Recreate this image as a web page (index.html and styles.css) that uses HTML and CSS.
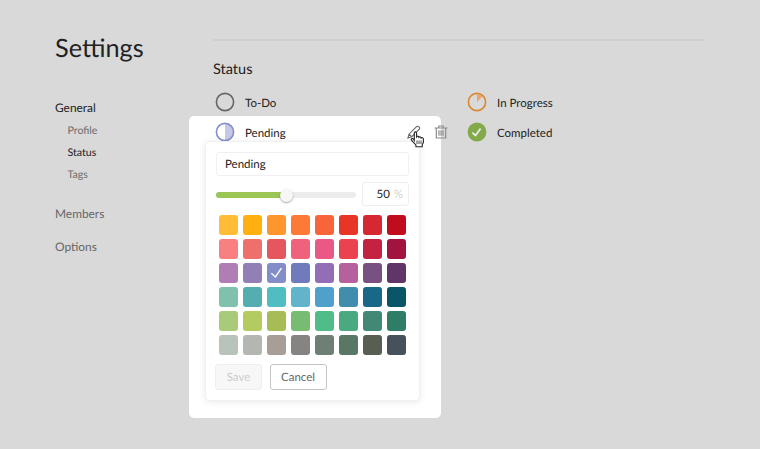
FILE: index.html
```html
<!DOCTYPE html>
<html lang="en">
<head>
<meta charset="utf-8">
<title>Settings</title>
<link rel="stylesheet" href="styles.css">
</head>
<body>
<div class="spotlight"></div>
<div class="page">
  <aside class="sidebar">
    <h1>Settings</h1>
    <nav>
      <a class="section current">General</a>
      <div class="subnav"><a>Profile</a><a class="current">Status</a><a>Tags</a></div>
      <a class="section">Members</a>
      <a class="section">Options</a>
    </nav>
  </aside>
  <main>
    <h2>Status</h2>
    <div class="statuses">
      <div class="status">
        <svg class="ring" viewBox="0 0 20 20"><circle cx="10" cy="10" r="8.6" fill="none" stroke="#666" stroke-width="1.6"/></svg>
        <span>To-Do</span>
      </div>
      <div class="status">
        <svg class="ring" viewBox="0 0 20 20"><path d="M10 10V2.4A7.6 7.6 0 0 1 15.4 4.6Z" fill="#f0a36c"/><circle cx="10" cy="10" r="8.6" fill="none" stroke="#dc862f" stroke-width="1.6"/></svg>
        <span>In Progress</span>
      </div>
      <div class="status">
        <svg class="ring" viewBox="0 0 20 20"><path d="M10 1.5a8.5 8.5 0 0 1 0 17Z" fill="#c5c9e6"/><circle cx="10" cy="10" r="8.6" fill="none" stroke="#858fcb" stroke-width="1.6"/></svg>
        <span>Pending</span>
        <div class="tools">
          <svg viewBox="0 0 14 14"><path d="M1 13 2 9.2 9.3 1.9Q10.7.6 12 1.8T12.1 4.5L4.8 11.7ZM2 9.2l2.8 2.5" fill="none" stroke="#666" stroke-width="1.1"/></svg>
          <svg viewBox="0 0 14 14"><path d="M.5 3h13M4.8 2.8V1h4.4v1.8M2.3 3v10h9.4V3M5 5.2v5.6M7 5.2v5.6M9 5.2v5.6" fill="none" stroke="#8c8c8c" stroke-width="1.2"/></svg>
        </div>
      </div>
      <div class="status">
        <svg class="ring" viewBox="0 0 20 20"><circle cx="10" cy="10" r="9.4" fill="#83a948"/><path d="m5.4 10.6 3.1 2.8 5.1-7" fill="none" stroke="#eee" stroke-width="1.7"/></svg>
        <span>Completed</span>
      </div>
    </div>
  </main>
</div>

<div class="popover">
  <div class="name-field">Pending</div>
  <div class="progress">
    <div class="track"><div class="fill"></div><div class="thumb"></div></div>
    <div class="percent">50 <span>%</span></div>
  </div>
  <div class="palette">
    <i style="background:#ffbd37"></i><i style="background:#ffb010"></i><i style="background:#ff962d"></i><i style="background:#fc7a36"></i><i style="background:#f9653b"></i><i style="background:#e73626"></i><i style="background:#d52831"></i><i style="background:#c00c1c"></i>
    <i style="background:#f98080"></i><i style="background:#ed706d"></i><i style="background:#e5575c"></i><i style="background:#f0617c"></i><i style="background:#ea5986"></i><i style="background:#eb424f"></i><i style="background:#c32341"></i><i style="background:#a3133f"></i>
    <i style="background:#b17db5"></i><i style="background:#927fb5"></i><i style="background:#838dc8"><svg viewBox="0 0 19 19"><path d="m4.3 10.2 4.1 3.7 6-8.7" fill="none" stroke="#fff" stroke-width="1.4"/></svg></i><i style="background:#6f7bbd"></i><i style="background:#946db7"></i><i style="background:#b6609d"></i><i style="background:#785182"></i><i style="background:#603568"></i>
    <i style="background:#80c1ad"></i><i style="background:#54adae"></i><i style="background:#50bdc0"></i><i style="background:#61b4ca"></i><i style="background:#4fa1cb"></i><i style="background:#418dae"></i><i style="background:#186887"></i><i style="background:#0a5567"></i>
    <i style="background:#a9ca78"></i><i style="background:#b3cb60"></i><i style="background:#a6bd55"></i><i style="background:#78bc71"></i><i style="background:#50bd88"></i><i style="background:#4aa981"></i><i style="background:#418976"></i><i style="background:#307d67"></i>
    <i style="background:#b8c4b9"></i><i style="background:#b4b6b1"></i><i style="background:#a69e97"></i><i style="background:#858482"></i><i style="background:#6e7f74"></i><i style="background:#587865"></i><i style="background:#595e53"></i><i style="background:#46515b"></i>
  </div>
  <div class="actions"><button class="save" disabled>Save</button><button class="cancel">Cancel</button></div>
</div>
<svg class="cursor" viewBox="0 0 16 17"><path d="M4.3 9.6V2.2Q4.3.9 5.4.9T6.6 2.2V5.8Q7.2 5 8 5.3T8.9 6.3Q9.6 5.6 10.4 6T11.2 7Q12 6.4 12.7 6.9T13.4 8V11.3L12.2 13.8V15.7H5.9V13.9L1.6 9.4Q.8 8.3 1.7 7.7T3.4 8.3Z" fill="#fff" stroke="#222" stroke-width="1.1"/><path d="M7 9.5V13M9 9.5V13M11 9.5V13" stroke="#333" stroke-width=".9"/></svg>
</body>
</html>
```
FILE: styles.css
```css
* { box-sizing: border-box; }
body {
  margin: 0;
  position: relative;
  width: 760px;
  height: 449px;
  overflow: hidden;
  background: #d9d9d9;
  color: #222;
  font-family: Lato, "Liberation Sans", sans-serif;
  text-rendering: geometricPrecision;
}
h1, h2 { margin: 0; font-weight: 400; }
.spotlight {
  position: absolute;
  left: 189px;
  top: 116px;
  width: 252px;
  height: 302px;
  border-radius: 5px;
  background: #fff;
}
.page { position: relative; display: flex; padding: 0 55px; }
.sidebar { width: 158px; padding-top: 30px; }
h1 { font-size: 25.3px; line-height: 36px; }
nav { display: flex; flex-direction: column; padding-top: 31px; }
.section { font-size: 11.9px; line-height: 22px; margin-bottom: 11px; color: #666; }
.section.current { margin-bottom: 0; }
.subnav {
  display: flex;
  flex-direction: column;
  padding: 1px 0 17px 12.5px;
  font-size: 10.6px;
  line-height: 22px;
  color: #6c6c6c;
}
.section.current, .subnav .current { color: #222; }
main { width: 492px; margin-top: 39px; border-top: 2px solid #cfcfcf; }
h2 { font-size: 14.5px; line-height: 20px; padding-top: 19px; }
.statuses {
  display: grid;
  grid-template-columns: 252px 240px;
  grid-auto-rows: 30px;
  margin-top: 7px;
}
.status {
  display: flex;
  align-items: center;
  padding-left: 2px;
  font-size: 11.5px;
}
.status span { padding-top: 2px; }
.ring { width: 20px; height: 20px; margin-right: 10px; }
.tools { display: flex; gap: 13px; margin-left: auto; margin-right: 17px; }
.tools svg { width: 14px; height: 14px; }
.popover {
  position: absolute;
  left: 206px;
  top: 142px;
  width: 213px;
  height: 258px;
  padding: 10px 10px 10px 9.5px;
  border-radius: 4px;
  background: #fff;
  box-shadow: 0 0 0 1px #f0f0f0, 0 1px 7px 1px rgba(0, 0, 0, .09);
}
.name-field {
  height: 24px;
  padding-left: 8.5px;
  border: 1px solid #f0f0f0;
  border-radius: 3px;
  font-size: 11.5px;
  line-height: 24px;
}
.progress { display: flex; align-items: center; gap: 6.5px; margin-top: 6px; }
.track { position: relative; width: 140px; height: 6px; top: .5px; border-radius: 3px; background: #ececec; }
.fill { width: 50%; height: 100%; border-radius: 3px; background: #9bc656; }
.thumb {
  position: absolute;
  left: 64px;
  top: -3px;
  width: 13px;
  height: 13px;
  border-radius: 50%;
  background: #f7f7f7;
  box-shadow: 0 1px 2px rgba(0, 0, 0, .35);
}
.percent {
  width: 47px;
  height: 24px;
  border: 1px solid #eee;
  border-radius: 3px;
  padding-right: 5px;
  text-align: right;
  font-size: 11.5px;
  line-height: 24px;
  word-spacing: 1px;
}
.percent span { color: #d0d0d0; }
.palette {
  display: grid;
  grid-template-columns: repeat(8, 19.4px);
  grid-auto-rows: 19.6px;
  gap: 4.4px 4.6px;
  margin: 9.2px 0 0 3.2px;
}
.palette i { border-radius: 3px; }
.palette svg { display: block; width: 19px; height: 19px; }
.actions { display: flex; gap: 7.5px; margin-top: 9.2px; margin-left: -.5px; }
button {
  height: 26px;
  padding: 2px 0 0;
  border-radius: 3px;
  font: 11.5px Lato, "Liberation Sans", sans-serif;
  text-rendering: inherit;
}
.save { width: 47px; border: 1px solid #eee; background: #f7f7f7; color: #ccc; }
.cancel { width: 57px; border: 1px solid #c4c4c4; background: #fff; color: #666; }
.cursor { position: absolute; left: 409.5px; top: 131px; width: 16px; height: 17px; }
```
